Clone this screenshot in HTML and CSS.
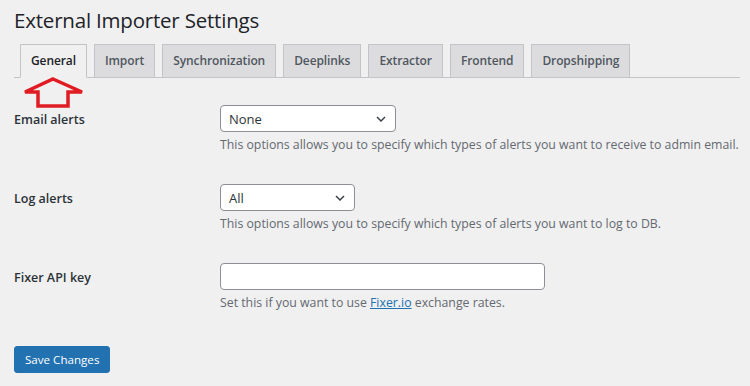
FILE: index.html
```html
<!DOCTYPE html>
<html lang="en">
<head>
    <meta charset="UTF-8">
    <title>External Importer Settings</title>
    <link rel="stylesheet" href="styles.css">
</head>
<body>
    <div class="wrap">
        <h1>External Importer Settings</h1>

        <div class="tabs">
            <a class="tab active" href="#">General</a>
            <a class="tab" href="#">Import</a>
            <a class="tab" href="#">Synchronization</a>
            <a class="tab" href="#">Deeplinks</a>
            <a class="tab" href="#">Extractor</a>
            <a class="tab" href="#">Frontend</a>
            <a class="tab" href="#">Dropshipping</a>

            <!-- annotation arrow -->
            <svg class="pointer" width="64" height="32" viewBox="0 0 64 32">
                <polygon points="31,2 60,15 46,15 46,29 16,29 16,15 3,15" fill="none" stroke="#e01b22" stroke-width="3.5" stroke-linejoin="miter"/>
            </svg>
        </div>

        <form class="settings">
            <div class="row">
                <div class="label">Email alerts</div>
                <div class="field">
                    <div class="select select-email">
                        <span>None</span>
                        <svg width="10" height="6" viewBox="0 0 10 6"><path d="M1 1l4 4 4-4" fill="none" stroke="#3c434a" stroke-width="1.5"/></svg>
                    </div>
                    <p class="desc">This options allows you to specify which types of alerts you want to receive to admin email.</p>
                </div>
            </div>

            <div class="row">
                <div class="label">Log alerts</div>
                <div class="field">
                    <div class="select select-log">
                        <span>All</span>
                        <svg width="10" height="6" viewBox="0 0 10 6"><path d="M1 1l4 4 4-4" fill="none" stroke="#3c434a" stroke-width="1.5"/></svg>
                    </div>
                    <p class="desc">This options allows you to specify which types of alerts you want to log to DB.</p>
                </div>
            </div>

            <div class="row">
                <div class="label">Fixer API key</div>
                <div class="field">
                    <input class="text-input" type="text">
                    <p class="desc">Set this if you want to use <a href="#">Fixer.io</a> exchange rates.</p>
                </div>
            </div>

            <p class="submit">
                <button class="button" type="button">Save Changes</button>
            </p>
        </form>
    </div>
</body>
</html>
```

FILE: styles.css
```css
:root {
    --bg: #f0f0f1;
    --text: #1d2327;
    --muted: #646970;
    --tab-bg: #dcdcde;
    --tab-border: #c3c4c7;
    --input-border: #8c8f94;
    --primary: #2271b1;
}

* {
    box-sizing: border-box;
    margin: 0;
    padding: 0;
}

body {
    background: var(--bg);
    color: var(--text);
    font-family: 'Open Sans', 'Noto Sans', sans-serif;
    font-size: 12.5px;
}

.wrap {
    padding: 0 10px 0 14px;
}

h1 {
    font-size: 20.5px;
    font-weight: 400;
    letter-spacing: -0.2px;
    line-height: 30px;
    padding-top: 5px;
    color: var(--text);
}

/* Tabs */
.tabs {
    position: relative;
    display: flex;
    margin-top: 9px;
    padding-left: 6px;
    border-bottom: 1px solid var(--tab-border);
    height: 34px;
}

.tab {
    margin-right: 7px;
    padding: 4px 10px;
    line-height: 24px;
    height: 34px;
    font-size: 12px;
    font-weight: 600;
    letter-spacing: -0.1px;
    color: #50575e;
    text-decoration: none;
    background: var(--tab-bg);
    border: 1px solid var(--tab-border);
}

.tab.active {
    background: var(--bg);
    color: #1d2327;
    border-bottom-color: var(--bg);
}

.pointer {
    position: absolute;
    left: 8px;
    top: 33px;
}

/* Form rows */
.settings {
    padding-top: 12px;
}

.row {
    display: flex;
}

.label {
    width: 206px;
    flex-shrink: 0;
    padding: 22px 10px 18px 0;
    font-weight: 600;
    line-height: 1.3;
    font-size: 12.5px;
    color: #2c3338;
}

.field {
    padding: 15px 10px 15px 0;
}

.select {
    display: flex;
    align-items: center;
    justify-content: space-between;
    height: 27px;
    padding: 0 9px 0 8px;
    background: #fff;
    border: 1px solid var(--input-border);
    border-radius: 4px;
    font-size: 13px;
    color: #2c3338;
}

.select-email {
    width: 176px;
}

.select-log {
    width: 135px;
}

.text-input {
    display: block;
    width: 325px;
    height: 27px;
    background: #fff;
    border: 1px solid var(--input-border);
    border-radius: 4px;
}

.desc {
    margin-top: 4px;
    line-height: 18px;
    color: var(--muted);
    font-size: 12.3px;
    white-space: nowrap;
}

.desc a {
    color: var(--primary);
}

.submit {
    padding-top: 19px;
}

.button {
    height: 27px;
    padding: 0 10px;
    background: var(--primary);
    border: 1px solid var(--primary);
    border-radius: 3px;
    color: #fff;
    font-family: inherit;
    font-size: 11.6px;
}
```
